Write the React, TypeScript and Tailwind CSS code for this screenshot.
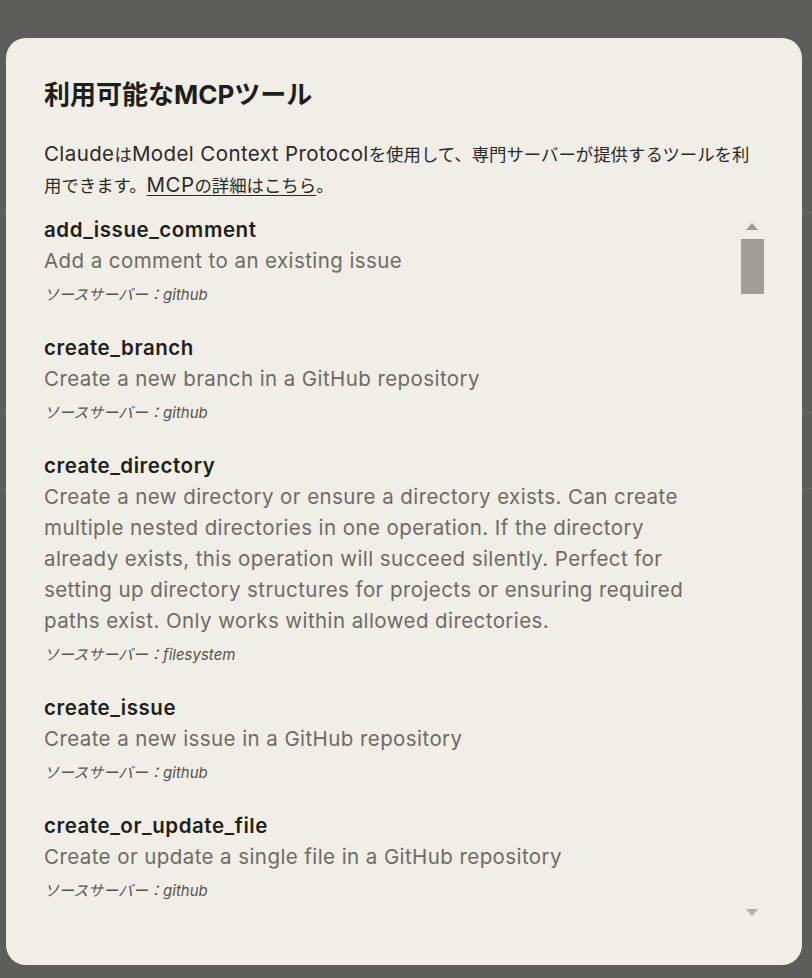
import React from 'react'

interface Tool {
  name: string
  description: string
  server: string
}

const tools: Tool[] = [
  { name: 'add_issue_comment', description: 'Add a comment to an existing issue', server: 'github' },
  { name: 'create_branch', description: 'Create a new branch in a GitHub repository', server: 'github' },
  {
    name: 'create_directory',
    description:
      'Create a new directory or ensure a directory exists. Can create multiple nested directories in one operation. If the directory already exists, this operation will succeed silently. Perfect for setting up directory structures for projects or ensuring required paths exist. Only works within allowed directories.',
    server: 'filesystem',
  },
  { name: 'create_issue', description: 'Create a new issue in a GitHub repository', server: 'github' },
  { name: 'create_or_update_file', description: 'Create or update a single file in a GitHub repository', server: 'github' },
  { name: 'create_pull_request', description: 'Create a new pull request in a GitHub repository', server: 'github' },
]

const font = "font-['Inter','Noto_Sans_CJK_JP',sans-serif]"

// latin runs inside the japanese intro use a larger size so they match the wide UI face
const Latin = ({ children }: { children: React.ReactNode }) => (
  <span className="text-[20.5px] tracking-[0.4px]">{children}</span>
)

const ToolItem = ({ tool }: { tool: Tool }) => {
  return (
    <li className="pb-[26px]">
      <div className="text-[20.5px] leading-[30px] font-semibold tracking-[0.55px] text-[#1f1e1b]">{tool.name}</div>
      <p className="text-[20.5px] leading-[31px] tracking-[0.42px] text-[#6e6b64]">{tool.description}</p>
      <div className="mt-[7px] text-[15px] leading-[24px] italic text-[#55534e]">
        ソースサーバー：{tool.server}
      </div>
    </li>
  )
}

export default function App() {
  return (
    <div className={`relative h-[978px] w-full overflow-hidden bg-[#5d5d5b] ${font}`}>
      {/* page behind the dim layer */}
      <div className="flex flex-col">
        <div className="h-[213px] border-b border-[#6a6a67]" />
        <div className="h-[200px] border-b border-[#6a6a67]" />
        <div className="h-[76px] border-b border-[#6a6a67]" />
        <div className="h-[220px] border-b border-[#626260]" />
      </div>

      {/* dialog */}
      <div className="absolute left-[6px] top-[38px] flex h-[927px] w-[796px] flex-col rounded-[20px] bg-[#f0eee7] px-[38px] pt-[41px]">
        <h2 className="text-[26px] leading-[32px] font-bold text-[#1f1e1b]">利用可能なMCPツール</h2>
        <p className="mt-[28px] text-[17.4px] leading-[30px] text-[#2b2a27]">
          <Latin>Claude</Latin>は<Latin>Model Context Protocol</Latin>を使用して、専門サーバーが提供するツールを利用できます。
          <a href="#" className="underline underline-offset-[3px]">
            <Latin>MCP</Latin>の詳細はこちら
          </a>
          。
        </p>

        <div className="relative mt-[14px] h-[707px] overflow-hidden">
          <ul className="pr-[48px]">
            {tools.map((t) => (
              <ToolItem key={t.name} tool={t} />
            ))}
          </ul>

          {/* scrollbar */}
          <div className="absolute right-0 top-0 flex h-full w-[24px] flex-col items-center">
            <div className="mt-[8px] h-0 w-0 border-x-[6px] border-b-[7px] border-x-transparent border-b-[#9c9a94]" />
            <div className="mt-[9px] h-[55px] w-[23px] bg-[#a09e98]" />
            <div className="mt-auto mb-[6px] h-0 w-0 border-x-[6px] border-t-[7px] border-x-transparent border-t-[#b3b1ab]" />
          </div>
        </div>
      </div>
    </div>
  )
}
